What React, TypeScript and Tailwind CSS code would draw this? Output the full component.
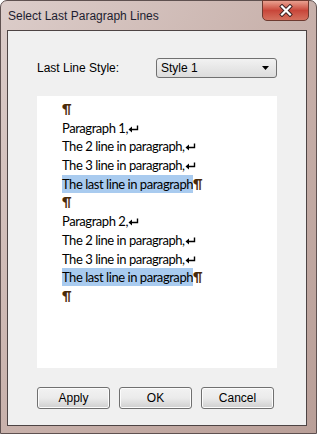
const lines: { text: string; kind: 'mark' | 'break' | 'last' }[] = [
  { text: '', kind: 'mark' },
  { text: 'Paragraph 1,', kind: 'break' },
  { text: 'The 2 line in paragraph,', kind: 'break' },
  { text: 'The 3 line in paragraph,', kind: 'break' },
  { text: 'The last line in paragraph', kind: 'last' },
  { text: '', kind: 'mark' },
  { text: 'Paragraph 2,', kind: 'break' },
  { text: 'The 2 line in paragraph,', kind: 'break' },
  { text: 'The 3 line in paragraph,', kind: 'break' },
  { text: 'The last line in paragraph', kind: 'last' },
  { text: '', kind: 'mark' },
];

const Pilcrow = () => <span className="text-[#4a2a08] font-bold tracking-normal">¶</span>;

const BreakArrow = () => (
  <svg width="11" height="8" viewBox="0 0 11 8" className="inline-block align-baseline">
    <path d="M9.5 0.5 V4.5 H2.5" stroke="#000" strokeWidth="1.4" fill="none" />
    <path d="M0.5 4.5 L4 1.5 V7.5 Z" fill="#000" />
  </svg>
);

const WinButton = ({ label }: { label: string }) => (
  <button className="w-[73px] h-[22px] rounded-[3px] border border-[#707070] bg-gradient-to-b from-[#f2f2f2] via-[#ebebeb] to-[#cfcfcf] text-[12px] text-black shadow-[inset_0_0_0_1px_#fcfcfc]">
    {label}
  </button>
);

export default function App() {
  return (
    <div className="w-[317px] h-[434px] bg-white" style={{ fontFamily: '"Liberation Sans", Arial, sans-serif' }}>
      <div className="relative w-[317px] h-[434px] rounded-t-[7px] border border-[#5f5150] bg-gradient-to-br from-[#dccdca] via-[#c8b1ab] to-[#b99f98] flex flex-col">
        {/* title bar */}
        <div className="h-[29px] flex items-center pl-[7px] text-[12px] text-[#1d1d30]">
          Select Last Paragraph Lines
        </div>
        <div className="absolute top-[-1px] right-[7px] w-[47px] h-[21px] rounded-b-[5px] border border-[#6e3a30] bg-gradient-to-b from-[#e8a090] via-[#c8463a] to-[#d4705e] flex items-center justify-center">
          <svg width="16" height="13" viewBox="0 0 16 13">
            <path d="M4 2.5 L12 10.5 M12 2.5 L4 10.5" stroke="#3a2020" strokeWidth="4" strokeLinecap="square" />
            <path d="M4 2.5 L12 10.5 M12 2.5 L4 10.5" stroke="#ffffff" strokeWidth="2.2" strokeLinecap="square" />
          </svg>
        </div>

        {/* client area */}
        <div className="ml-[6px] mr-[9px] h-[396px] border border-[#4d4444] bg-[#f0f0f0] flex flex-col px-[29px]">
          <div className="flex items-center justify-between mt-[27px] h-[20px]">
            <span className="text-[12px] text-black">Last Line Style:</span>
            <div className="w-[121px] h-[20px] rounded-[3px] border border-[#707070] bg-gradient-to-b from-[#f2f2f2] to-[#dcdcdc] flex items-center justify-between pl-[4px] pr-[7px] text-[12px] text-black">
              <span>Style 1</span>
              <svg width="7" height="4" viewBox="0 0 7 4">
                <path d="M0 0 H7 L3.5 4 Z" fill="#000" />
              </svg>
            </div>
          </div>

          <div className="mt-[18px] h-[272px] bg-white pt-[4px] pl-[25px] text-[13px] text-black leading-[18.7px] tracking-[-0.45px]" style={{ fontFamily: 'Lato, "Liberation Sans", sans-serif' }}>
            {lines.map((l, i) => (
              <div key={i} className="h-[18.7px] whitespace-nowrap">
                {l.kind === 'mark' && <Pilcrow />}
                {l.kind === 'break' && (
                  <>
                    {l.text}
                    <BreakArrow />
                  </>
                )}
                {l.kind === 'last' && (
                  <>
                    <span className="bg-[#a9cbef] py-[1px]">{l.text}</span>
                    <Pilcrow />
                  </>
                )}
              </div>
            ))}
          </div>

          <div className="flex gap-[9px] mt-[19px]">
            <WinButton label="Apply" />
            <WinButton label="OK" />
            <WinButton label="Cancel" />
          </div>
        </div>
      </div>
    </div>
  );
}
